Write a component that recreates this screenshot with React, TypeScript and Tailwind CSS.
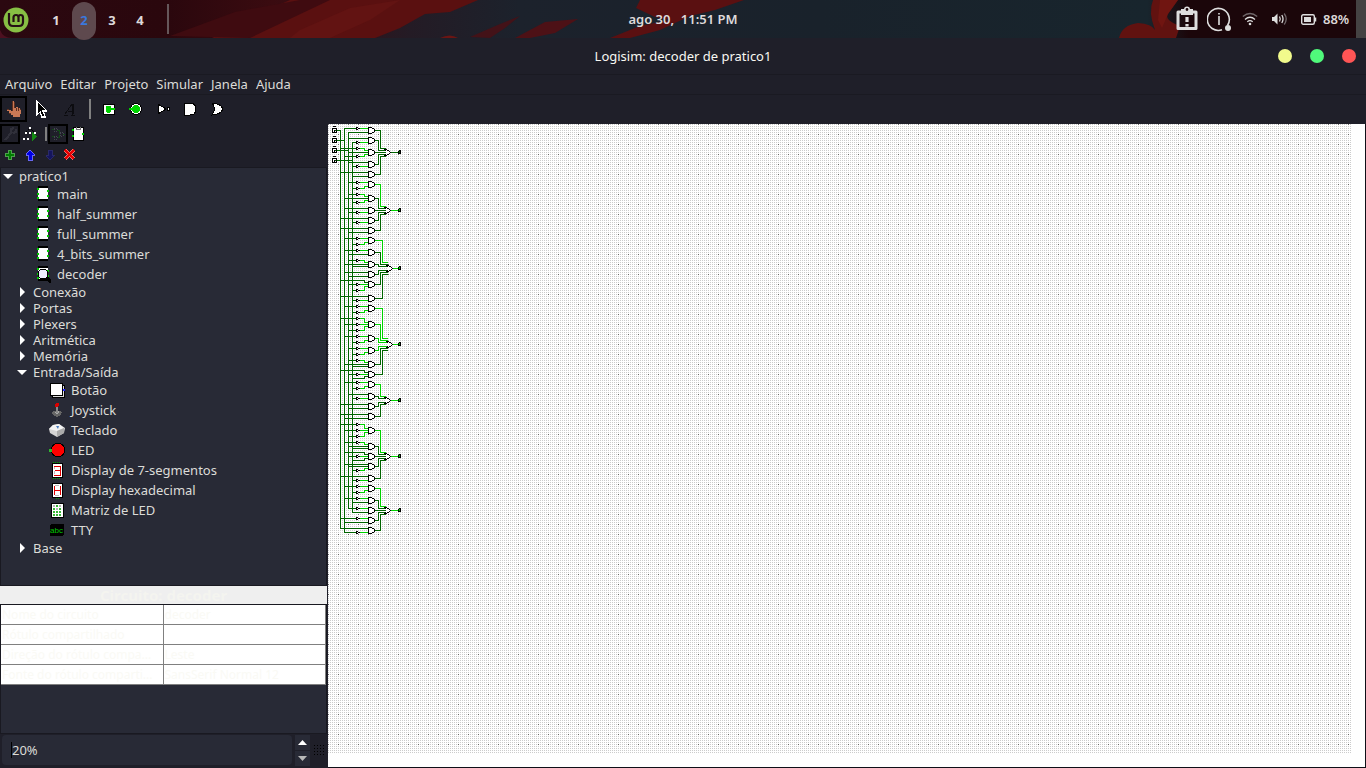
import React from "react";

/* ---------- circuit data ---------- */

const BUS_X = [340, 344, 348, 352];

// An input row: [y of the row, bus index, inverted, y at the gate]
type Input = [number, number, boolean, number];
type Gate = { y: number; inputs: Input[] };
type Block = { or: number; orX: number; on: boolean; gates: Gate[] };

const blocks: Block[] = [
  {
    or: 152, orX: 386, on: false, gates: [
      { y: 130, inputs: [[128, 1, true, 128], [132, 2, false, 132]] },
      { y: 140, inputs: [[138, 2, false, 138], [142, 3, true, 142]] },
      { y: 152, inputs: [[148, 0, true, 150], [152, 2, false, 152], [156, 1, true, 154]] },
      { y: 164, inputs: [[162, 2, false, 162], [166, 3, true, 166]] },
      { y: 174, inputs: [[172, 0, false, 172], [176, 3, false, 176]] },
    ],
  },
  {
    or: 210, orX: 386, on: true, gates: [
      { y: 184, inputs: [[182, 2, true, 182], [188, 3, true, 186]] },
      { y: 198, inputs: [[194, 2, true, 196], [198, 1, false, 198], [202, 3, true, 200]] },
      { y: 210, inputs: [[208, 1, false, 208], [212, 2, true, 212]] },
      { y: 220, inputs: [[218, 0, false, 218], [222, 3, true, 222]] },
      { y: 230, inputs: [[228, 0, false, 228], [232, 2, false, 232]] },
    ],
  },
  {
    or: 268, orX: 388, on: true, gates: [
      { y: 240, inputs: [[238, 1, true, 238], [244, 3, true, 242]] },
      { y: 252, inputs: [[250, 1, true, 250], [254, 2, false, 254]] },
      { y: 264, inputs: [[260, 2, true, 262], [264, 1, false, 264], [266, 3, false, 266]] },
      { y: 274, inputs: [[272, 1, false, 272], [276, 2, false, 276]] },
      { y: 284, inputs: [[280, 0, false, 282], [284, 2, true, 284], [290, 3, true, 286]] },
      { y: 298, inputs: [[296, 0, false, 296], [300, 3, true, 300]] },
    ],
  },
  {
    or: 344, orX: 388, on: true, gates: [
      { y: 308, inputs: [[306, 1, true, 306], [312, 3, true, 310]] },
      { y: 324, inputs: [[318, 0, true, 322], [324, 1, true, 324], [330, 2, true, 326]] },
      { y: 338, inputs: [[336, 1, true, 336], [342, 3, true, 340]] },
      { y: 350, inputs: [[348, 2, true, 348], [354, 3, true, 352]] },
      { y: 364, inputs: [[360, 2, true, 362], [364, 1, false, 364], [366, 3, false, 366]] },
      { y: 374, inputs: [[370, 0, false, 372], [374, 2, true, 374], [378, 3, false, 376]] },
    ],
  },
  {
    or: 400, orX: 386, on: true, gates: [
      { y: 384, inputs: [[382, 1, true, 382], [388, 3, true, 386]] },
      { y: 396, inputs: [[394, 2, false, 394], [398, 3, true, 398]] },
      { y: 406, inputs: [[404, 0, false, 404], [408, 2, false, 408]] },
      { y: 416, inputs: [[414, 0, false, 414], [418, 1, false, 418]] },
    ],
  },
  {
    or: 456, orX: 386, on: true, gates: [
      { y: 430, inputs: [[424, 0, true, 428], [430, 1, true, 430], [436, 2, true, 432]] },
      { y: 446, inputs: [[442, 1, true, 444], [446, 2, false, 446], [448, 3, false, 448]] },
      { y: 456, inputs: [[452, 1, false, 454], [456, 2, true, 456], [460, 3, false, 458]] },
      { y: 466, inputs: [[464, 1, false, 464], [466, 2, false, 466], [470, 3, true, 468]] },
      { y: 478, inputs: [[476, 0, false, 476], [480, 3, true, 480]] },
    ],
  },
  {
    or: 510, orX: 386, on: true, gates: [
      { y: 488, inputs: [[486, 1, true, 486], [492, 3, true, 490]] },
      { y: 500, inputs: [[498, 1, true, 498], [502, 3, false, 502]] },
      { y: 510, inputs: [[508, 2, true, 508], [512, 3, false, 512]] },
      { y: 520, inputs: [[518, 0, true, 518], [522, 1, false, 522]] },
      { y: 530, inputs: [[528, 0, false, 528], [532, 1, true, 532]] },
    ],
  },
];

const DARK = "#006400";
const LIVE = "#00d200";

function CircuitBlock({ block }: { block: Block }) {
  const n = block.gates.length;
  const half = Math.floor(n / 2);
  const x = block.orX;
  const y0 = block.or;
  return (
    <g>
      {block.gates.map((g, i) => {
        const live = g.inputs.every((r) => r[2]);
        const k = n % 2 ? i - half : i < half ? i - half : i - half + 1;
        const tapX = 376 + Math.abs(k) * 2;
        return (
          <g key={g.y}>
            {g.inputs.map(([y, bus, inv, to]) => {
              const bend = y === to ? "" : "V" + to;
              return (
                <g key={y}>
                  <path d={`M${BUS_X[bus]} ${y}H${inv ? 356 : 364}${inv ? "" : bend + "H368"}`} stroke={DARK} />
                  {inv && <path d={`M360 ${y}H364${bend}H368`} stroke={LIVE} />}
                  {inv && (
                    <path d={`M356 ${y - 1}V${y + 1}M357 ${y - 1}H357M357 ${y + 1}H357M358 ${y}H359`} stroke="#000" />
                  )}
                </g>
              );
            })}
            <path d={`M375 ${g.y}H${tapX}V${y0 + k * 2}H${x - 1}`} stroke={live ? LIVE : DARK} />
            <path
              d={`M368 ${g.y - 3}H371M368 ${g.y + 3}H371M368 ${g.y - 3}V${g.y + 3}M372 ${g.y - 2}H373M372 ${g.y + 2}H373M374 ${g.y - 1}V${g.y + 1}`}
              stroke="#000"
            />
            <path d={`M369 ${g.y - 2}H371M369 ${g.y - 1}H373M369 ${g.y}H373M369 ${g.y + 1}H373M369 ${g.y + 2}H371`} stroke="#fff" />
          </g>
        );
      })}
      <path d={`M${x + 5} ${y0}H397`} stroke={block.on ? LIVE : DARK} />
      <path d={`M${x} ${y0 - 2}V${y0 + 2}M${x + 1} ${y0 - 1}V${y0 + 1}M${x + 2} ${y0 - 1}V${y0 + 1}M${x + 3} ${y0}V${y0}`} stroke="#fff" />
      <path
        d={`M${x - 2} ${y0 - 3}H${x}M${x + 1} ${y0 - 2}H${x + 2}M${x + 3} ${y0 - 1}V${y0 - 1}M${x + 4} ${y0}V${y0}M${x + 3} ${y0 + 1}V${y0 + 1}M${x + 1} ${y0 + 2}H${x + 2}M${x - 2} ${y0 + 3}H${x}M${x - 1} ${y0 - 2}V${y0 - 2}M${x - 1} ${y0 + 2}V${y0 + 2}`}
        stroke="#000"
      />
      <path d={`M398 ${y0 - 1}V${y0 + 1}M399 ${y0 + 1}H400M400 ${y0 - 1}V${y0 + 1}M399 ${y0 - 2}H400`} stroke="#000" />
      <path d={`M399 ${y0 - 1}V${y0}`} stroke={block.on ? LIVE : DARK} />
    </g>
  );
}

function Canvas() {
  return (
    <main className="flex min-w-0 flex-1 border-r border-b border-[#101018] bg-white pr-[14px] pb-[14px]">
      <svg className="h-full w-full" role="img" aria-label="decoder" shapeRendering="crispEdges">
        <defs>
          <pattern id="grid" width="10" height="10" patternUnits="userSpaceOnUse">
            {[0, 2, 4, 6, 8].map((y) =>
              [0, 2, 4, 6, 8].map((x) => (
                <rect key={`${x}-${y}`} x={x} y={y} width="1" height="1" fill={x + y === 0 ? "#666666" : "#cccccc"} />
              )),
            )}
          </pattern>
        </defs>
        <rect width="100%" height="100%" fill="url(#grid)" />
        <g transform="translate(-327.5 -123.5)" fill="none" strokeWidth="1" strokeLinecap="square">
          <path d="M340 130V528M344 128V532M348 132V508M352 142V512" stroke={DARK} />
          {[130, 140, 150, 160].map((y, i) => (
            <g key={y}>
              <path d={`M336 ${y}H${BUS_X[i]}`} stroke={DARK} />
              <path d={`M332 ${y - 2}H336M332 ${y - 2}V${y + 2}M332 ${y + 2}H336M336 ${y - 2}V${y + 2}M334 ${y}H335M334 ${y + 1}V${y + 1}M333 ${y - 4}H335`} stroke="#000" />
              <path d={`M335 ${y}V${y}`} stroke={DARK} />
            </g>
          ))}
          {blocks.map((b) => (
            <CircuitBlock key={b.or} block={b} />
          ))}
        </g>
      </svg>
    </main>
  );
}

/* ---------- system panel ---------- */

function Wallpaper() {
  return (
    <svg className="absolute inset-0 -z-10 h-full w-full" viewBox="0 0 1366 38" preserveAspectRatio="none" aria-hidden="true">
      <defs>
        <linearGradient id="sky" x1="0" x2="1">
          <stop offset="0" stopColor="#2b0810" />
          <stop offset=".12" stopColor="#2a070d" />
          <stop offset=".2" stopColor="#3a0b10" />
          <stop offset=".3" stopColor="#241b25" />
          <stop offset=".38" stopColor="#1c222c" />
          <stop offset=".6" stopColor="#19222b" />
          <stop offset=".84" stopColor="#18252d" />
          <stop offset=".87" stopColor="#1b060a" />
          <stop offset="1" stopColor="#1b060a" />
        </linearGradient>
      </defs>
      <rect width="1366" height="38" fill="url(#sky)" />
      <path d="M0 30Q3 38 12 38H0Z" fill="#4d1020" />
      <path d="M212 38L240 22 290 0H478L450 12 425 14 400 28 375 38Z" fill="#5a1010" />
      <path d="M170 36L235 12 300 0H330L250 38Z" fill="#3f0b10" />
      <path d="M300 30L350 8 400 0 370 20 330 38H290Z" fill="#6a1513" opacity=".5" />
      <path d="M470 37L500 24 520 16 505 28 490 38Z" fill="#431218" />
      <path d="M515 38L545 22 578 19 555 33 530 38Z" fill="#4d1116" />
      <path d="M440 38Q450 33 458 38Z" fill="#6b1513" />
      <path d="M610 38L640 26 670 20 655 17 636 8 640 0H744L715 10 690 16 660 30 630 38Z" fill="#5a1011" />
      <path d="M1119 38Q1122 25 1138 23 1152 24 1155 30 1148 12 1153 0H1178L1168 14Q1164 20 1180 26L1176 38Z" fill="#611210" />
      <path d="M1160 0H1178L1168 14 1162 28 1158 20Z" fill="#7a1812" opacity=".6" />
    </svg>
  );
}

function MintLogo() {
  return (
    <svg width="26" height="26" viewBox="0 0 26 26" className="mt-[2px]" aria-hidden="true">
      <circle cx="13" cy="13" r="12.500" fill="#87bf44" />
      <path d="M6 6V15Q6 19 10 19H16Q20 19 20 15V10.500Q20 8 17.500 8 15.500 8 15.500 10.500V15M15.500 10.500Q15.500 8 13 8 10.500 8 10.500 10.500V15" fill="none" stroke="#241014" strokeWidth="2.200" />
    </svg>
  );
}

function SystemTray() {
  return (
    <div className="flex h-full items-center text-[#dcd8d8]">
      <svg width="22" height="26" viewBox="0 0 22 26" aria-hidden="true">
        <path d="M2 6H20V22.500H2Z" fill="none" stroke="#dedede" strokeWidth="3" strokeLinejoin="round" />
        <path d="M5 3H17V9H5Z" fill="#dedede" />
        <circle cx="11" cy="3.500" r="2.200" fill="#1b060a" stroke="#dedede" strokeWidth="1.600" />
        <path d="M11 11V16M11 18V20.500" stroke="#dedede" strokeWidth="3.200" />
      </svg>
      <svg className="ml-[9px]" width="25" height="26" viewBox="0 0 25 26" aria-hidden="true">
        <path d="M20.500 19.500A11 11 0 1 0 15 23.800" fill="none" stroke="#dedede" strokeWidth="1.600" />
        <path d="M12 10V19M12 7V8.500" stroke="#dedede" strokeWidth="1.600" />
        <circle cx="21" cy="22" r="3" fill="#dedede" />
      </svg>
      <svg className="ml-[10px]" width="16" height="14" viewBox="0 0 16 14" fill="none" strokeWidth="1.300" aria-hidden="true">
        <path d="M.800 4.500Q8 -1.500 15.200 4.500" stroke="#70676a" />
        <path d="M3 7.500Q8 3 13 7.500M5.300 9.800Q8 7.500 10.700 9.800" stroke="#dedede" />
        <circle cx="8" cy="12" r="1.300" fill="#dedede" />
      </svg>
      <svg className="ml-[13px]" width="17" height="14" viewBox="0 0 17 14" fill="none" strokeWidth="1.300" aria-hidden="true">
        <path d="M1 5H3L6.500 1.500V12.500L3 9H1Z" fill="#dedede" />
        <path d="M8.500 4.500Q10 7 8.500 9.500M10.800 3Q13.300 7 10.800 11" stroke="#dedede" />
        <path d="M13.200 1.500Q17.200 7 13.200 12.500" stroke="#70676a" />
      </svg>
      <svg className="ml-[13px]" width="16" height="11" viewBox="0 0 16 11" aria-hidden="true">
        <rect x=".700" y=".700" width="12.600" height="9.600" rx="1.500" fill="none" stroke="#dedede" strokeWidth="1.400" />
        <rect x="3" y="3" width="7" height="5" fill="#dedede" />
        <path d="M14.500 3.500V7.500" stroke="#dedede" strokeWidth="1.500" />
      </svg>
      <span className="ml-[6px] w-[33px] text-[13px] font-semibold">88%</span>
      <span className="h-full w-[10px] bg-[#454343]" />
    </div>
  );
}

function Panel() {
  return (
    <header className="relative z-10 flex h-[38px] shrink-0 items-center justify-between text-[#dedada]">
      <Wallpaper />
      <div className="flex flex-1 items-center">
        <span className="ml-[3px]">
          <MintLogo />
        </span>
        <nav aria-label="Workspaces" className="ml-[15px] flex items-center gap-1 text-[13px] font-bold">
          <button className="w-6 pt-0.5">1</button>
          <button className="-mb-1 h-[38px] w-6 rounded-full bg-[#5e494e] pb-0.5 text-[#3a78dd]">2</button>
          <button className="w-6 pt-0.5">3</button>
          <button className="w-6 pt-0.5">4</button>
        </nav>
        <span className="ml-[15px] h-[30px] w-[2px] bg-[#65575a]" />
      </div>
      <time className="text-[13px] font-semibold whitespace-pre">ago 30,  11:51 PM</time>
      <div className="flex h-full flex-1 justify-end">
        <SystemTray />
      </div>
    </header>
  );
}

/* ---------- window chrome ---------- */

function TitleBar() {
  return (
    <div className="flex h-9 shrink-0 items-center">
      <div className="flex-1" />
      <h1 className="text-[13px] text-[#f8f8f2]">Logisim: decoder de pratico1</h1>
      <div className="flex flex-1 justify-end">
        <div className="mr-[10px] flex gap-[18px]">
          <button aria-label="Minimizar" className="size-[14px] rounded-full bg-[#f1fa8c]" />
          <button aria-label="Maximizar" className="size-[14px] rounded-full bg-[#50fa7b]" />
          <button aria-label="Fechar" className="size-[14px] rounded-full bg-[#ff5555]" />
        </div>
      </div>
    </div>
  );
}

function MenuBar() {
  return (
    <nav className="flex h-5 shrink-0 items-center gap-2 border-t border-[#1a1a22] pb-px pl-[5px]">
      {["Arquivo", "Editar", "Projeto", "Simular", "Janela", "Ajuda"].map((m) => (
        <button key={m}>{m}</button>
      ))}
    </nav>
  );
}

function Tool({ label, active, children }: { label: string; active?: boolean; children: React.ReactNode }) {
  return (
    <button
      aria-label={label}
      className={`flex h-[26px] w-[27px] items-center justify-center border-2 ${active ? "border-black" : "border-transparent"}`}
    >
      {children}
    </button>
  );
}

function Icon({ children }: { children: React.ReactNode }) {
  return (
    <svg width="16" height="18" viewBox="0 0 16 18" className="shrink-0" shapeRendering="crispEdges" aria-hidden="true">
      {children}
    </svg>
  );
}

function Toolbar() {
  return (
    <div className="flex h-[30px] shrink-0 items-center border-t border-[#1a1a22] pb-[2px]">
      <Tool label="Manipular" active>
        <Icon>
          <path d="M6 1H8V8H10V7H12V8H14V9H15V14H14V17H7V15H5V13H3V11H1V9H3V10H5V11H6Z" fill="#c87856" />
          <path d="M6 1V11M8 2V8M10 8V11M12 8V11M3 9H1M3 13H5M14 9H15" stroke="#60301f" fill="none" />
        </Icon>
      </Tool>
      <Tool label="Editar seleção">
        <Icon>
          <path d="M4 1L13 10V11H10L12 16V17H9L7 12 4 15Z" fill="#000" stroke="#fff" strokeWidth="1.300" />
        </Icon>
      </Tool>
      <Tool label="Texto">
        <Icon>
          <path d="M4 15H8M11 15H15M5 14L12 4M12 4V15M8 11H12M13 4V14" fill="none" stroke="#0c0c10" />
        </Icon>
      </Tool>
      <span className="mr-[4px] ml-[8px] h-5 w-[2px] bg-[#808080]" />
      <Tool label="Pino de entrada">
        <Icon>
          <rect x="2" y="4" width="11" height="10" fill="#fff" stroke="#000" />
          <path d="M5 6H10V8H14V10H10V12H9V13H6V12H5Z" fill="#00d200" />
        </Icon>
      </Tool>
      <Tool label="Pino de saída">
        <Icon>
          <circle cx="8" cy="9" r="5.500" fill="#fff" stroke="#000" />
          <circle cx="8" cy="9" r="3.800" fill="#00d200" />
          <path d="M1 8H5V10H1Z" fill="#00d200" />
        </Icon>
      </Tool>
      <Tool label="Porta NÃO">
        <Icon>
          <path d="M3 4L11 9 3 14Z" fill="#fff" stroke="#000" />
          <circle cx="13.500" cy="9" r="1.500" fill="#fff" stroke="#000" />
        </Icon>
      </Tool>
      <Tool label="Porta E">
        <Icon>
          <path d="M2 3H8Q14 3 14 9T8 15H2Z" fill="#fff" stroke="#000" />
        </Icon>
      </Tool>
      <Tool label="Porta OU">
        <Icon>
          <path d="M3 3Q11 3 14 9 11 15 3 15 8 9 3 3Z" fill="#fff" stroke="#000" />
        </Icon>
      </Tool>
    </div>
  );
}

function MiniTool({ label, active, children }: { label: string; active?: boolean; children: React.ReactNode }) {
  return (
    <button
      aria-label={label}
      className={`flex h-5 w-5 items-center justify-center border-2 ${active ? "border-black" : "border-transparent"}`}
    >
      {children}
    </button>
  );
}

function ExplorerTools() {
  return (
    <div className="shrink-0">
      <div className="flex h-[21px] items-start">
        <MiniTool label="Mostrar projeto" active>
          <Icon>
            <path d="M3 15L10 7M9 7L9 4 12 3M11 8L14 7 14 4" fill="none" stroke="#30303a" strokeWidth="2" />
          </Icon>
        </MiniTool>
        <MiniTool label="Mostrar simulação">
          <Icon>
            <path d="M4 7L8 3 12 7" fill="none" stroke="#000" strokeDasharray="2 1" />
            <path d="M7 2H9V4H7ZM3 7H5V9H3ZM7 7H9V9H7ZM12 7H14V9H12ZM1 13H3V15H1ZM5 13H7V15H5Z" fill="#fff" />
            <path d="M10 7L15 12 10 16Z" fill="#138a13" />
          </Icon>
        </MiniTool>
        <span className="mt-[3px] mr-px ml-[5px] h-[14px] w-[2px] bg-[#808080]" />
        <MiniTool label="Editar leiaute" active>
          <Icon>
            <path d="M2 4H4M2 11H4M7 5H9V9M13 9H15M7 12H9V10" fill="none" stroke="#124a16" />
            <path d="M4 3H7V6H4ZM4 11H7V14H4ZM10 7H13V11H10Z" fill="none" stroke="#444650" strokeDasharray="1 1" />
          </Icon>
        </MiniTool>
        <MiniTool label="Editar aparência">
          <Icon>
            <rect x="3" y="2" width="10" height="13" fill="#fff" stroke="#000" />
            <path d="M6 2V4H10V2" fill="none" stroke="#777" />
            <path d="M2 4H4V6H2ZM2 10H4V12H2ZM12 8H14V10H12Z" fill="#00d200" />
          </Icon>
        </MiniTool>
      </div>
      <div className="flex h-[22px] items-start">
        <MiniTool label="Adicionar circuito">
          <Icon>
            <path d="M6 4H9V7H12V10H9V13H6V10H3V7H6Z" fill="#007c00" stroke="#4ea04e" />
          </Icon>
        </MiniTool>
        <MiniTool label="Mover para cima">
          <Icon>
            <path d="M8 4L12 8V9H10V14H6V9H4V8Z" fill="#0000e6" stroke="#6868f0" />
          </Icon>
        </MiniTool>
        <MiniTool label="Mover para baixo">
          <Icon>
            <path d="M8 14L12 10V9H10V4H6V9H4V10Z" fill="#15155e" stroke="#2a2a68" />
          </Icon>
        </MiniTool>
        <MiniTool label="Remover circuito">
          <Icon>
            <path d="M3 4L12 13M12 4L3 13" fill="none" stroke="#f06868" strokeWidth="4" />
            <path d="M3 4L12 13M12 4L3 13" fill="none" stroke="#e60000" strokeWidth="2" />
          </Icon>
        </MiniTool>
      </div>
    </div>
  );
}

/* ---------- explorer tree ---------- */

const chip = (
  <>
    <rect x="3" y="2" width="10" height="13" fill="#fff" />
    <path d="M3 2H13M3 15H13" stroke="#000" strokeWidth="1.500" />
    <path d="M2 3H4V5H2ZM2 8H4V10H2ZM2 12H4V14H2ZM12 5H14V7H12ZM12 10H14V12H12Z" fill="#00c800" />
  </>
);

const icons: Record<string, React.ReactNode> = {
  chip,
  lens: (
    <>
      {chip}
      <path d="M11 12L16 17" stroke="#000" strokeWidth="3" />
      <circle cx="8" cy="9" r="5" fill="#eeeeff" stroke="#000" />
    </>
  ),
  button: (
    <>
      <rect x="3" y="4" width="12" height="12" fill="#ddd" stroke="#000" />
      <rect x="1" y="2" width="12" height="12" fill="#fff" stroke="#000" />
      <path d="M14 8H16V10H14Z" fill="#2222ff" />
    </>
  ),
  joystick: (
    <>
      <path d="M3 11L8 9 13 11 12 14 8 16 4 14Z" fill="#666" />
      <path d="M5 11L8 10 11 11 8 13Z" fill="#aaa" />
      <path d="M8 4V12" stroke="#888" strokeWidth="1.500" />
      <circle cx="8" cy="4" r="2" fill="#d80000" />
    </>
  ),
  keyboard: (
    <g shapeRendering="auto">
      <path d="M0 8L4 4 10 3 16 7 15 12 8 16 1 12Z" fill="#d4d4d4" />
      <path d="M0 8L4 4 10 3 15 7 8 10Z" fill="#f4f4f4" />
      <path d="M8 10L15 7V12L8 16Z" fill="#aaa" />
      <path d="M7 5L10 5 9 8Z" fill="#4b7dc0" />
    </g>
  ),
  led: (
    <>
      <circle cx="9" cy="9" r="6.800" fill="#f00" stroke="#000" />
      <path d="M0 8H3V11H0Z" fill="#2fb82f" />
    </>
  ),
  seven: (
    <>
      <rect x="3" y="2" width="10" height="14" fill="#fff" stroke="#000" />
      <path d="M5 5H11V14H5M6 9H11" fill="none" stroke="#e00000" />
      <path d="M5 6V8M5 10V13" stroke="#bbb" />
      <path d="M4 1H12M4 17H12" stroke="#00a000" strokeDasharray="1 1" />
    </>
  ),
  hex: (
    <>
      <rect x="3" y="2" width="10" height="14" fill="#fff" stroke="#000" />
      <path d="M5 5V14M11 5V14M5 9H11" fill="none" stroke="#e00000" />
      <path d="M6 4H10M6 14H10" stroke="#bbb" />
      <path d="M7 17H11" stroke="#00a000" strokeDasharray="1 1" />
    </>
  ),
  matrix: (
    <>
      <rect x="2" y="2" width="12" height="14" fill="#fff" stroke="#000" />
      <path d="M5 4V15M8 4V15M11 4V15" stroke="#35b835" strokeWidth="2" strokeDasharray="2 1" />
      <path d="M4 5H6M7 8H9M10 5H12" stroke="#b4b4b4" strokeWidth="2" />
    </>
  ),
  tty: (
    <>
      <rect x="1" y="3" width="14" height="12" rx="2" fill="#000" />
      <text x="1" y="12" fontSize="8" fontFamily="Liberation Sans, sans-serif" fill="#00c800">
        abc
      </text>
    </>
  ),
};

function Folder({ label, open, root }: { label: string; open?: boolean; root?: boolean }) {
  return (
    <button className={`flex h-4 items-center ${root ? "pl-px" : "pl-[15px]"}`}>
      <svg width="12" height="12" viewBox="0 0 12 12" aria-hidden="true">
        <path d={open ? "M1 4H11L6 9Z" : "M4 1V11L9 6Z"} fill="#fff" />
      </svg>
      <span className="pl-[5px]">{label}</span>
    </button>
  );
}

function Leaf({ icon, label, deep }: { icon: string; label: string; deep?: boolean }) {
  return (
    <button className={`flex h-5 items-center gap-[6px] ${deep ? "pl-12" : "pl-[34px]"}`}>
      <Icon>{icons[icon]}</Icon>
      <span>{label}</span>
    </button>
  );
}

function Explorer() {
  return (
    <nav aria-label="Projeto" className="flex min-h-0 flex-1 flex-col items-start overflow-hidden border border-[#191921] bg-[#282a36]">
      <Folder label="pratico1" open root />
      <Leaf icon="chip" label="main" />
      <Leaf icon="chip" label="half_summer" />
      <Leaf icon="chip" label="full_summer" />
      <Leaf icon="chip" label="4_bits_summer" />
      <Leaf icon="lens" label="decoder" />
      <Folder label="Conexão" />
      <Folder label="Portas" />
      <Folder label="Plexers" />
      <Folder label="Aritmética" />
      <Folder label="Memória" />
      <Folder label="Entrada/Saída" open />
      <Leaf deep icon="button" label="Botão" />
      <Leaf deep icon="joystick" label="Joystick" />
      <Leaf deep icon="keyboard" label="Teclado" />
      <Leaf deep icon="led" label="LED" />
      <Leaf deep icon="seven" label="Display de 7-segmentos" />
      <Leaf deep icon="hex" label="Display hexadecimal" />
      <Leaf deep icon="matrix" label="Matriz de LED" />
      <Leaf deep icon="tty" label="TTY" />
      <Folder label="Base" />
    </nav>
  );
}

/* ---------- attributes and zoom ---------- */

const attributes = [
  ["Nome do circuito", "decoder"],
  ["Rótulo compartilhado", ""],
  ["Direção do rótulo compa...", "Leste"],
  ["Fonte do rótulo comparti...", "SansSerif Normal 12"],
];

function Attributes() {
  return (
    <section className="flex h-[148px] shrink-0 flex-col">
      <h2 className="flex h-[18px] items-center justify-center bg-[#efefef] text-[15px] font-bold text-[#f4f4ef]">
        Circuito: decoder
      </h2>
      <div className="flex-1 border border-[#191921] bg-[#282a36]">
        <table className="w-full table-fixed border-separate border-spacing-0 bg-white text-[12px] text-[#fafaf5]">
          <tbody>
            {attributes.map(([name, value]) => (
              <tr key={name} className="h-5">
                <td className="border-r border-b border-[#808080] p-0 pl-px leading-[19px] whitespace-nowrap">{name}</td>
                <td className="border-r border-b border-[#808080] p-0 pl-px leading-[19px] whitespace-nowrap">{value}</td>
              </tr>
            ))}
          </tbody>
        </table>
      </div>
    </section>
  );
}

function Zoom() {
  return (
    <div className="flex h-[34px] shrink-0 items-center pb-[2px] pl-[2px]">
      <div className="flex h-[30px] min-w-0 flex-1 items-center rounded-sm bg-[#282a36] pl-[9px]">
        <span className="h-4 w-px bg-black" />
        <input aria-label="Zoom" defaultValue="20%" className="min-w-0 flex-1 bg-transparent outline-none" />
      </div>
      <div className="ml-[3px] flex w-[15px] flex-col gap-px">
        <button aria-label="Aumentar zoom" className="flex h-[15px] items-center justify-center bg-[#282a36]">
          <svg width="9" height="5" viewBox="0 0 9 5" aria-hidden="true"><path d="M0 5L4.500 0 9 5Z" fill="#fff" /></svg>
        </button>
        <button aria-label="Diminuir zoom" className="flex h-[15px] items-center justify-center bg-[#282a36]">
          <svg width="9" height="5" viewBox="0 0 9 5" aria-hidden="true"><path d="M0 0L4.500 5 9 0Z" fill="#b8b8b8" /></svg>
        </button>
      </div>
      <svg className="mr-[2px] ml-[4px]" width="11" height="11" shapeRendering="crispEdges" aria-hidden="true">
        {[0, 3, 6, 9].map((y) => [0, 3, 6, 9].map((x) => <rect key={`${x}-${y}`} x={x} y={y} width="1" height="1" fill="#000" />))}
      </svg>
    </div>
  );
}

export default function App() {
  return (
    <div className="flex h-screen flex-col overflow-hidden bg-[#1f1f29] font-['Noto_Sans','Open_Sans',sans-serif] text-[13px] leading-4 text-[#dcdcd8]">
      <Panel />
      <TitleBar />
      <MenuBar />
      <Toolbar />
      <div className="flex min-h-0 flex-1">
        <aside className="flex w-[328px] shrink-0 flex-col pr-px">
          <ExplorerTools />
          <Explorer />
          <Attributes />
          <Zoom />
        </aside>
        <Canvas />
      </div>
    </div>
  );
}
